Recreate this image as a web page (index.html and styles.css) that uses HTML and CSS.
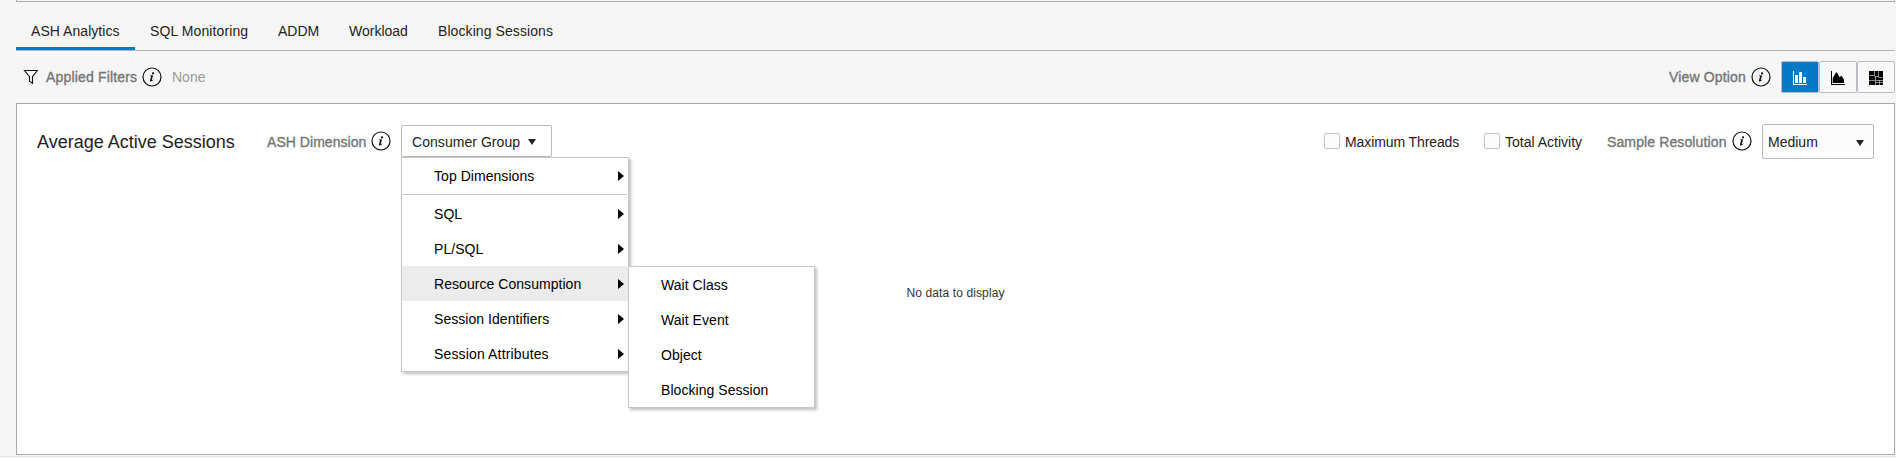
FILE: index.html
```html
<!DOCTYPE html>
<html lang="en">
<head>
<meta charset="utf-8">
<title>ASH Analytics</title>
<link rel="stylesheet" href="styles.css">
</head>
<body>
<svg width="0" height="0" class="defs">
  <symbol id="info" viewBox="0 0 20 20">
    <circle cx="10" cy="10" r="9" fill="none" stroke="#111" stroke-width="1.2"/>
    <path d="M10.7 5.3a1.1 1.1 0 1 1 0 2.1a1.1 1.1 0 0 1 0-2.1zM7.9 8.6L11.1 8.2L9.8 13C9.7 13.5 10 13.5 11.3 12.4L11.6 12.8C9.5 15 7.6 14.8 8 13.2L9 9.5C9.1 9.1 8.7 9.1 7.9 9.1z" fill="#111"/>
  </symbol>
</svg>
<div class="page">
  <div class="top-panel"></div>
  <nav class="tabs">
    <a class="tab active"><span class="w-ash">ASH Analytics</span></a>
    <a class="tab"><span class="w-sql">SQL Monitoring</span></a>
    <a class="tab"><span class="w-addm">ADDM</span></a>
    <a class="tab"><span class="w-work">Workload</span></a>
    <a class="tab"><span class="w-block">Blocking Sessions</span></a>
  </nav>
  <div class="filters">
    <svg class="funnel" width="16" height="16" viewBox="0 0 16 16"><path d="M1.5 1.5H14.3L9.5 7.6V14.2L6.5 12.2V7.6Z" fill="none" stroke="#111" stroke-width="1.1"/></svg>
    <span class="label w-applied">Applied Filters</span>
    <svg class="info" width="20" height="20"><use href="#info"/></svg>
    <span class="none">None</span>
    <span class="spacer"></span>
    <span class="label w-view">View Option</span>
    <svg class="info" width="20" height="20"><use href="#info"/></svg>
    <div class="views">
      <button class="view on"><svg width="16" height="16" viewBox="0 0 16 16" fill="#fff"><path d="M1 1h1v13h13v1H1zM3 5h3v8H3zM7 2h3v11H7zM11 7h3v6h-3z"/></svg></button>
      <button class="view"><svg width="16" height="16" viewBox="0 0 16 16"><path d="M1 1h1v13h13v1H1zM2.7 13V8L6 2.6H7L9.5 7L11.5 5.8L14 9.5V13z"/></svg></button>
      <button class="view"><svg width="16" height="16" viewBox="0 0 16 16"><rect x="1" y="1" width="14" height="14"/><path d="M6.5 1V6M1 5.5H6.5M1 10.5H15M7.5 6V15M6.5 6.5H11M10.5 1V6.5M10.5 7.5H15M7 12.5H15M11.5 10V15" fill="none" stroke="#aaa" stroke-width=".8"/></svg></button>
    </div>
  </div>
  <main class="panel">
    <div class="toolbar">
      <h1 class="title">Average Active Sessions</h1>
      <span class="text label w-dim">ASH Dimension</span>
      <svg class="info" width="20" height="20"><use href="#info"/></svg>
      <div class="dropdown">
        <span class="text w-group">Consumer Group</span><i class="caret"></i>
        <div class="menu">
          <div class="item">Top Dimensions<i class="arrow"></i></div>
          <hr class="rule">
          <div class="item">SQL<i class="arrow"></i></div>
          <div class="item">PL/SQL<i class="arrow"></i></div>
          <div class="item hover">Resource Consumption<i class="arrow"></i>
            <div class="menu sub">
              <div class="item">Wait Class</div>
              <div class="item">Wait Event</div>
              <div class="item">Object</div>
              <div class="item">Blocking Session</div>
            </div>
          </div>
          <div class="item">Session Identifiers<i class="arrow"></i></div>
          <div class="item wide">Session Attributes<i class="arrow"></i></div>
        </div>
      </div>
      <span class="spacer"></span>
      <i class="check"></i><span class="text w-max">Maximum Threads</span>
      <i class="check"></i><span class="text w-total">Total Activity</span>
      <span class="text label w-res">Sample Resolution</span>
      <svg class="info" width="20" height="20"><use href="#info"/></svg>
      <div class="select"><span>Medium</span><i class="caret"></i></div>
    </div>
    <div class="empty">No data to display</div>
  </main>
  <div class="foot"></div>
</div>
</body>
</html>
```
FILE: styles.css
```css
* { box-sizing: border-box; }
body { margin: 0; background: #f6f6f6; font: 14px/20px "Liberation Sans", Arial, sans-serif; color: #222; overflow: hidden; white-space: nowrap; }
.defs { position: absolute; }
.page { height: 458px; display: flex; flex-direction: column; }
.top-panel { height: 2px; margin: 0 1px 0 16px; border: 1px solid #aaa; border-top: 0; }
.tabs { display: flex; height: 49px; margin: 0 1px 0 16px; border-bottom: 1px solid #aeb8c2; }
.tab { height: 48px; padding: 19px 15px 0; }
.tab span { display: block; }
.active { border-bottom: 3px solid #0679c6; }
.w-ash { width: 89px; letter-spacing: 0.05px; }
.w-sql { width: 98px; letter-spacing: 0.1px; }
.w-addm { width: 41px; }
.w-work { width: 59px; }
.w-block { letter-spacing: 0.08px; }
.filters { display: flex; align-items: center; height: 52px; padding: 0 1px 0 23px; }
.funnel { margin-right: 7px; }
.label { color: #757575; -webkit-text-stroke: 0.35px #757575; }
.w-applied { width: 96px; letter-spacing: 0.17px; }
.none { margin-left: 10px; color: #999; }
.spacer { flex: 1; }
.w-view { width: 82px; letter-spacing: 0.15px; }
.views { display: flex; margin-left: 10px; }
.view { width: 38px; height: 32px; padding: 2px 0 0; border: 1px solid #b8bdc8; border-radius: 2px; background: #f8f8f8; display: flex; align-items: center; justify-content: center; }
.on { background: #0679c6; }
.panel { height: 352px; margin: 0 1px 0 16px; border: 1px solid #aaa; background: #fff; }
.toolbar { display: flex; align-items: center; height: 74px; padding: 0 20px; }
.text { padding-top: 2px; }
.title { width: 230px; margin: 0; padding-top: 2px; font-size: 18px; font-weight: 400; }
.w-dim { width: 104px; letter-spacing: 0.04px; }
.dropdown { position: relative; display: flex; align-items: center; width: 151px; height: 32px; margin-left: 10px; padding-left: 10px; border: 1px solid #b4bac4; border-radius: 2px; }
.w-group { width: 116px; letter-spacing: 0.05px; }
.caret { margin-top: 2px; border: 4.5px solid transparent; border-top: 6px solid #222; border-bottom: 0; }
.menu { position: absolute; z-index: 2; left: -1px; top: 31px; width: 228px; border: 1px solid #c8c8c8; background: #fff; color: #000; box-shadow: 2px 2px 3px rgba(0,0,0,.25); }
.item { position: relative; display: flex; align-items: center; justify-content: space-between; height: 35px; padding: 1px 4px 0 32px; letter-spacing: 0.05px; }
.wide { letter-spacing: 0.15px; }
.hover { background: #ececec; }
.rule { height: 1px; margin: 1px; border: 0; background: #c8c8c8; }
.arrow { border: 5px solid transparent; border-left: 6px solid #000; border-right: 0; }
.sub { left: 226px; top: 0; width: 187px; }
.check { width: 16px; height: 16px; border: 1px solid #c4c4c4; border-radius: 2px; background: #fcfcfc; margin-right: 5px; }
.w-max { width: 139px; letter-spacing: -0.1px; }
.w-total { width: 102px; }
.w-res { width: 125px; letter-spacing: 0.12px; }
.select { display: flex; align-items: center; justify-content: space-between; width: 112px; height: 35px; margin: 1px 0 0 10px; padding: 0 9px 0 5px; border: 1px solid #b4bac4; border-radius: 2px; background: #fcfcfc; }
.empty { margin-top: 105px; text-align: center; font-size: 12px; line-height: 20px; letter-spacing: 0.12px; color: #333; }
.foot { height: 2px; margin-top: 1px; border-top: 1px solid #e4e4e4; background: #fafafa; }
```
